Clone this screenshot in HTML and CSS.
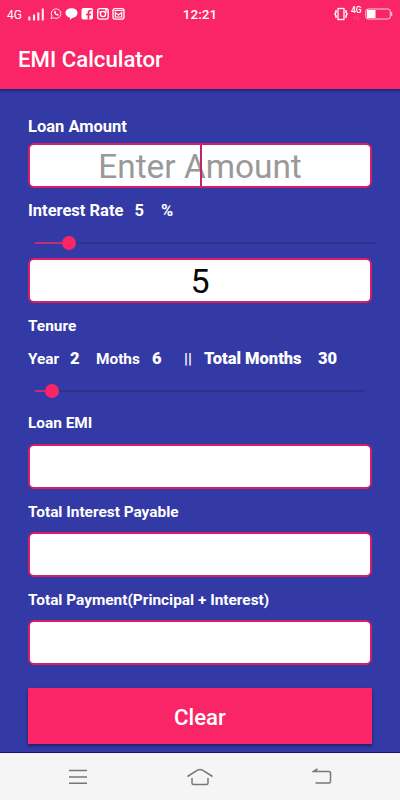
FILE: index.html
```
<!DOCTYPE html>
<html lang="en">
<head>
<meta charset="utf-8">
<title>EMI Calculator</title>
<link rel="stylesheet" href="styles.css">
</head>
<body>
<div class="phone">
  <header class="top">
    <div class="status">
      <div class="status-left">
        <span class="net">4G</span>
        <svg width="104" height="16" viewBox="0 0 104 16" fill="none" stroke="#fff">
          <path d="M4.300 14.500v-4M9 14.500v-6M13.300 14.500v-8M17.800 14.500v-12" stroke-width="2.100" stroke-opacity=".9"/>
          <g stroke-opacity=".85" stroke-width="1"><path d="M26 12.500l.9-2.500a4.800 4.800 0 1 1 1.800 1.800z"/><path d="M29.100 5.500c0 2.500 1.500 4 4 4.300l.8-1.200-1.500-.9-.7.6-1.200-1.200.6-.8-.7-1.500z" fill="#fff" stroke="none"/></g>
          <path d="M46.500 2.200c3.500 0 6 2 6 4.600 0 3-2.500 5.200-5.500 5.200l-2 2v-2.200c-2.500-.6-4.500-2.400-4.500-5 0-2.600 2.500-4.600 6-4.600z" fill="#fff" stroke="none"/>
          <rect x="56.500" y="2" width="11.500" height="11.500" rx="2" fill="#fff" stroke="none"/>
          <path d="M66.500 4.500h-1c-1.500 0-2 .6-2 2v7M61 8.500h5" stroke="#f92566" stroke-width="1.700"/>
          <rect x="72.700" y="2.600" width="10.500" height="10.500" rx="2" stroke-width="1.300"/><path d="M73 6h10"/><circle cx="78" cy="8" r="2.600" fill="#f92566" stroke-width="1.300"/><path d="M80 4h2" stroke-width="1.500"/>
          <rect x="88" y="2.600" width="11" height="10.500" rx="2" stroke-width="1.300"/><path d="M89.300 4.500h8.500M90.300 6.500l3.200 2.500 3.200-2.500v4.500h-6.400z" stroke-width="1.200"/>
        </svg>
      </div>
      <span class="clock">12:21</span>
      <div class="status-right">
        <svg width="16" height="16" viewBox="0 0 16 16" fill="none" stroke="#fff"><rect x="5" y="2.500" width="6" height="11" stroke-width="1.300"/><path d="M3 4v2l-1 2 1 2v2M13 4v2l1 2-1 2v2" stroke-width="1.500"/></svg>
        <span class="net2">4G<small>↑↓</small></span>
        <svg class="battery" width="29" height="14" viewBox="0 0 29 14" fill="none" stroke="#fff"><rect x=".8" y="2" width="24.500" height="10" rx="2.200" stroke-opacity=".8"/><path d="M2 3h8.500v8h-8.500z" fill="#fff" stroke="none"/><path d="M26.700 5v4" stroke-opacity=".8"/></svg>
      </div>
    </div>
    <h1>EMI Calculator</h1>
  </header>
  <main class="form">
    <div class="label amount-label">Loan Amount</div>
    <div class="field hint">Enter Amount<i class="caret"></i></div>
    <div class="label rate"><span>Interest Rate</span><span class="rate-value">5</span><span>%</span></div>
    <div class="slider rate-slider"><i class="fill"></i><i class="thumb"></i></div>
    <div class="field">5</div>
    <div class="label small tenure">Tenure</div>
    <div class="label small months"><span class="c1">Year</span><b class="c2">2</b><span class="c3">Moths</span><b class="c4">6</b><span class="c5">||</span><b class="c6">Total Months</b><b>30</b></div>
    <div class="slider tenure-slider"><i class="fill"></i><i class="thumb"></i></div>
    <div class="label small emi">Loan EMI</div>
    <div class="field"></div>
    <div class="label small result">Total Interest Payable</div>
    <div class="field"></div>
    <div class="label small result">Total Payment(Principal + Interest)</div>
    <div class="field"></div>
    <div class="clear">Clear</div>
  </main>
  <nav class="nav">
    <svg width="20" height="16" viewBox="0 0 20 16"><path d="M1 1.500h18M1 8h18M1 14.200h18"/></svg>
    <svg width="28" height="18" viewBox="0 0 28 18"><path d="M1.500 8.500L11.500 2.200Q14 .8 16.500 2.200L26.500 8.500M6 10v5q0 1.500 1.500 1.500h13q1.500 0 1.500-1.500v-5"/></svg>
    <svg width="20" height="17" viewBox="0 0 20 17"><path d="M5.500 1L1.500 3.500H17q1.500 0 1.500 1.500v8.500q0 1.500-1.500 1.500H3.500"/></svg>
  </nav>
</div>
</body>
</html>
```
FILE: styles.css
```
* { box-sizing: border-box; }
body { margin: 0; font-family: Roboto, sans-serif; color: #fff; }
.phone { width: 400px; height: 800px; overflow: hidden; display: flex; flex-direction: column; background: #3339a5; }
.top { height: 89px; flex: none; background: #f92566; box-shadow: 0 1px 3px rgba(0,0,40,.6); }
.status { height: 28px; padding: 0 7px; display: grid; grid-template-columns: 1fr auto 1fr; align-items: center; }
.status-left, .status-right { display: flex; align-items: center; }
.status-right { justify-content: flex-end; }
.status svg { display: block; flex: none; }
.net { font-size: 12px; width: 16px; padding-top: 2px; letter-spacing: -.1px; }
.net + svg { margin-left: 2px; margin-top: -1px; }
.clock { font-size: 13.5px; font-weight: 500; }
.net2 { font-size: 8.5px; font-weight: 500; line-height: 9px; width: 11px; margin: -2px 3px 0 2px; }
.net2 small { display: block; font-size: 6px; line-height: 5px; opacity: .4; text-align: center; }
.battery { margin-right: -1px; margin-top: -1px; }
h1 { margin: 16px 0 0 18px; font-size: 22.2px; line-height: 30px; font-weight: 500; }
.form { height: 664px; flex: none; padding: 28px 28px 0; border-bottom: 1px solid #11136e; }
.label { height: 20px; line-height: 20px; font-size: 16.5px; font-weight: 700; display: flex; align-items: baseline; white-space: pre; }
.small { font-size: 15.4px; }
.amount-label { margin-bottom: 6px; }
.field { height: 45px; border: 2px solid #d51f68; border-radius: 6px; background: #fff; color: #080808; font-size: 34px; line-height: 43px; display: flex; justify-content: center; position: relative; }
.hint { color: #999; font-size: 33.4px; }
.caret { position: absolute; left: 169.500px; top: 0; width: 2px; height: 41px; background: #c42463; }
.rate { margin-top: 13px; }
.rate-value { margin: 0 17px 0 11px; }
.slider { height: 14px; display: flex; align-items: center; background: linear-gradient(#2d318f, #2d318f) center / 100% 2px no-repeat; }
.fill { height: 2px; background: #c52c7b; }
.thumb { width: 14px; height: 14px; border-radius: 50%; background: #f92566; }
.rate-slider { margin: 15px -4px 8.400px 7px; }
.rate-slider .fill { width: 27px; }
.tenure-slider { margin: 14.600px 7px 15.500px; }
.tenure-slider .fill { width: 10px; }
.tenure { margin-top: 12.600px; }
.months { margin-top: 13px; }
.months b { font-size: 16.5px; }
.c1 { width: 42px; }
.c2 { width: 26px; }
.c3 { width: 56px; }
.c4 { width: 32px; }
.c5 { width: 20px; }
.c6 { width: 114px; }
.emi { margin-bottom: 11px; }
.result { margin: 12.600px 0 10.600px; }
.clear { height: 56px; margin-top: 22.500px; background: #f92566; box-shadow: 0 2px 3px rgba(0,0,40,.45); display: flex; align-items: center; justify-content: center; font-size: 22.200px; font-weight: 500; padding-top: 3px; }
.nav { flex: 1; background: #f5f5f5; display: flex; padding-left: 68px; align-items: center; }
.nav svg { fill: none; stroke: #777; stroke-width: 1.500; }
.nav svg:nth-child(2) { margin-left: 98px; }
.nav svg:nth-child(3) { margin-left: 98px; }
```
